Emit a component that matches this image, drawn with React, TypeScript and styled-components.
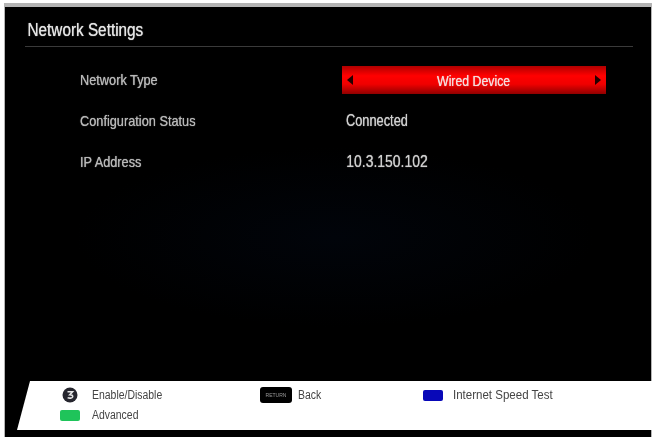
import styled, { createGlobalStyle } from 'styled-components';

const GlobalStyle = createGlobalStyle`
  html, body {
    margin: 0;
    padding: 0;
    background: #fff;
    overflow: hidden;
  }
  body {
    font-family: "Liberation Sans", Arial, sans-serif;
  }
`;

const rows = [
  { label: 'Network Type', value: 'Wired Device', selected: true, stretch: 0.82 },
  { label: 'Configuration Status', value: 'Connected', stretch: 0.8 },
  { label: 'IP Address', value: '10.3.150.102', stretch: 0.87 },
];

/**
 * TV network settings screen
 */
export default function App() {
  return (
    <>
      <GlobalStyle />
      <Page>
        <Screen>
          <Header>
            <Title>Network Settings</Title>
          </Header>

          <Rows>
            {rows.map((row) => (
              <Row key={row.label}>
                <Label>{row.label}</Label>
                {row.selected ? (
                  <Selector>
                    <Arrow $side="left" />
                    <span>{row.value}</span>
                    <Arrow $side="right" />
                  </Selector>
                ) : (
                  <Value $stretch={row.stretch}>{row.value}</Value>
                )}
              </Row>
            ))}
          </Rows>

          <Legend>
            <LegendItem $col={1} $gap={12}>
              <KeyCell>
                <svg width="16" height="16" viewBox="0 0 16 16">
                  <circle cx="8" cy="8" r="7.5" fill="#26262e" />
                  <path d="M5.5 4.8h5l-2.6 2.8c2.2 0 3.2 1.1 2.7 2.4-.5 1.3-3.2 1.5-5 .6" fill="none" stroke="#e4e4e4" strokeWidth="1.6" />
                </svg>
              </KeyCell>
              <LegendText>Enable/Disable</LegendText>
            </LegendItem>
            <LegendItem $col={2} $gap={6}>
              <BackKey>RETURN</BackKey>
              <LegendText>Back</LegendText>
            </LegendItem>
            <LegendItem $col={3} $gap={10}>
              <ColorKey $color="#0808b8" />
              <LegendText $stretch={0.96}>Internet Speed Test</LegendText>
            </LegendItem>
            <LegendItem $col={1} $gap={12}>
              <ColorKey $color="#1fc45a" />
              <LegendText>Advanced</LegendText>
            </LegendItem>
          </Legend>
        </Screen>
      </Page>
    </>
  );
}

const Page = styled.main`
  width: 656px;
  height: 437px;
  box-sizing: border-box;
  padding: 3px 4px 0 4px;
  background: #fff;
`;

const Screen = styled.section`
  height: 434px;
  box-sizing: border-box;
  display: flex;
  flex-direction: column;
  padding-bottom: 7px;
  border-top: 4px solid #b4b4b4;
  border-left: 1px solid #b4b4b4;
  border-right: 1px solid #b4b4b4;
  background:
    radial-gradient(ellipse 260px 90px at 330px 230px, #01040a, transparent),
    #000;
`;

const Header = styled.header`
  margin: 11px 18px 0 20px;
  height: 28px;
  border-bottom: 1px solid #3a3a3a;
`;

const Title = styled.h1`
  margin: 0;
  padding-left: 3px;
  font-size: 18px;
  line-height: 24px;
  font-weight: 400;
  color: #e4e4e4;
  text-shadow: 0 0 1px #e4e4e4;
  transform: scaleX(0.85);
  transform-origin: left center;
  filter: blur(0.6px);
`;

const Rows = styled.div`
  flex: 1;
  display: flex;
  flex-direction: column;
  gap: 13px;
  padding: 19px 0 0 75px;
`;

const Row = styled.div`
  display: grid;
  grid-template-columns: 262px 264px;
  align-items: center;
  height: 28px;
`;

const Label = styled.div`
  margin-bottom: 2px;
  font-size: 15px;
  color: #b8b8b8;
  text-shadow: 0 0 1px #b8b8b8;
  transform: scaleX(0.85);
  transform-origin: left center;
  white-space: nowrap;
  filter: blur(0.6px);
`;

const Value = styled.div<{ $stretch?: number }>`
  padding-left: 5px;
  font-size: 16px;
  color: #cfcfcf;
  text-shadow: 0 0 1px #cfcfcf;
  transform: scaleX(${(p) => p.$stretch ?? 0.85});
  transform-origin: left center;
  white-space: nowrap;
  filter: blur(0.6px);
`;

const Selector = styled.div`
  display: flex;
  align-items: center;
  justify-content: space-between;
  height: 28px;
  padding: 0 5px;
  box-sizing: border-box;
  background: linear-gradient(#b00000 0%, #ff0000 35%, #f00000 65%, #900000 100%);
  color: #f4dcdc;
  font-size: 15px;
  filter: blur(0.6px);

  span {
    transform: scaleX(0.82);
    white-space: nowrap;
    text-shadow: 0 0 1px #f4dcdc;
  }
`;

const Arrow = styled.i<{ $side: 'left' | 'right' }>`
  width: 0;
  height: 0;
  border-top: 5px solid transparent;
  border-bottom: 5px solid transparent;
  ${(p) => (p.$side === 'left' ? 'border-right: 6px solid #200;' : 'border-left: 6px solid #200;')}
`;

const Legend = styled.footer`
  height: 49px;
  box-sizing: border-box;
  margin-right: -5px;
  display: grid;
  grid-template-columns: 200px 163px 1fr;
  grid-auto-rows: 20px;
  padding: 4px 0 0 55px;
  background: #fff;
  clip-path: polygon(25px 0, 100% 0, 100% 100%, 12px 100%);
`;

const LegendItem = styled.div<{ $col: number; $gap: number }>`
  grid-column: ${(p) => p.$col};
  display: flex;
  align-items: center;
  gap: ${(p) => p.$gap}px;
`;

const LegendText = styled.span<{ $stretch?: number }>`
  font-size: 12px;
  color: #444;
  transform: scaleX(${(p) => p.$stretch ?? 0.87});
  transform-origin: left center;
  white-space: nowrap;
  filter: blur(0.5px);
`;

const KeyCell = styled.span`
  width: 20px;
  display: flex;
  justify-content: center;
`;

const BackKey = styled.span`
  width: 32px;
  height: 16px;
  border-radius: 3px;
  background: #000;
  color: #999;
  font-size: 5px;
  line-height: 16px;
  text-align: center;
  filter: blur(0.4px);
`;

const ColorKey = styled.span<{ $color: string }>`
  width: 20px;
  height: 11px;
  border-radius: 2px;
  background: ${(p) => p.$color};
  filter: blur(0.4px);
`;
